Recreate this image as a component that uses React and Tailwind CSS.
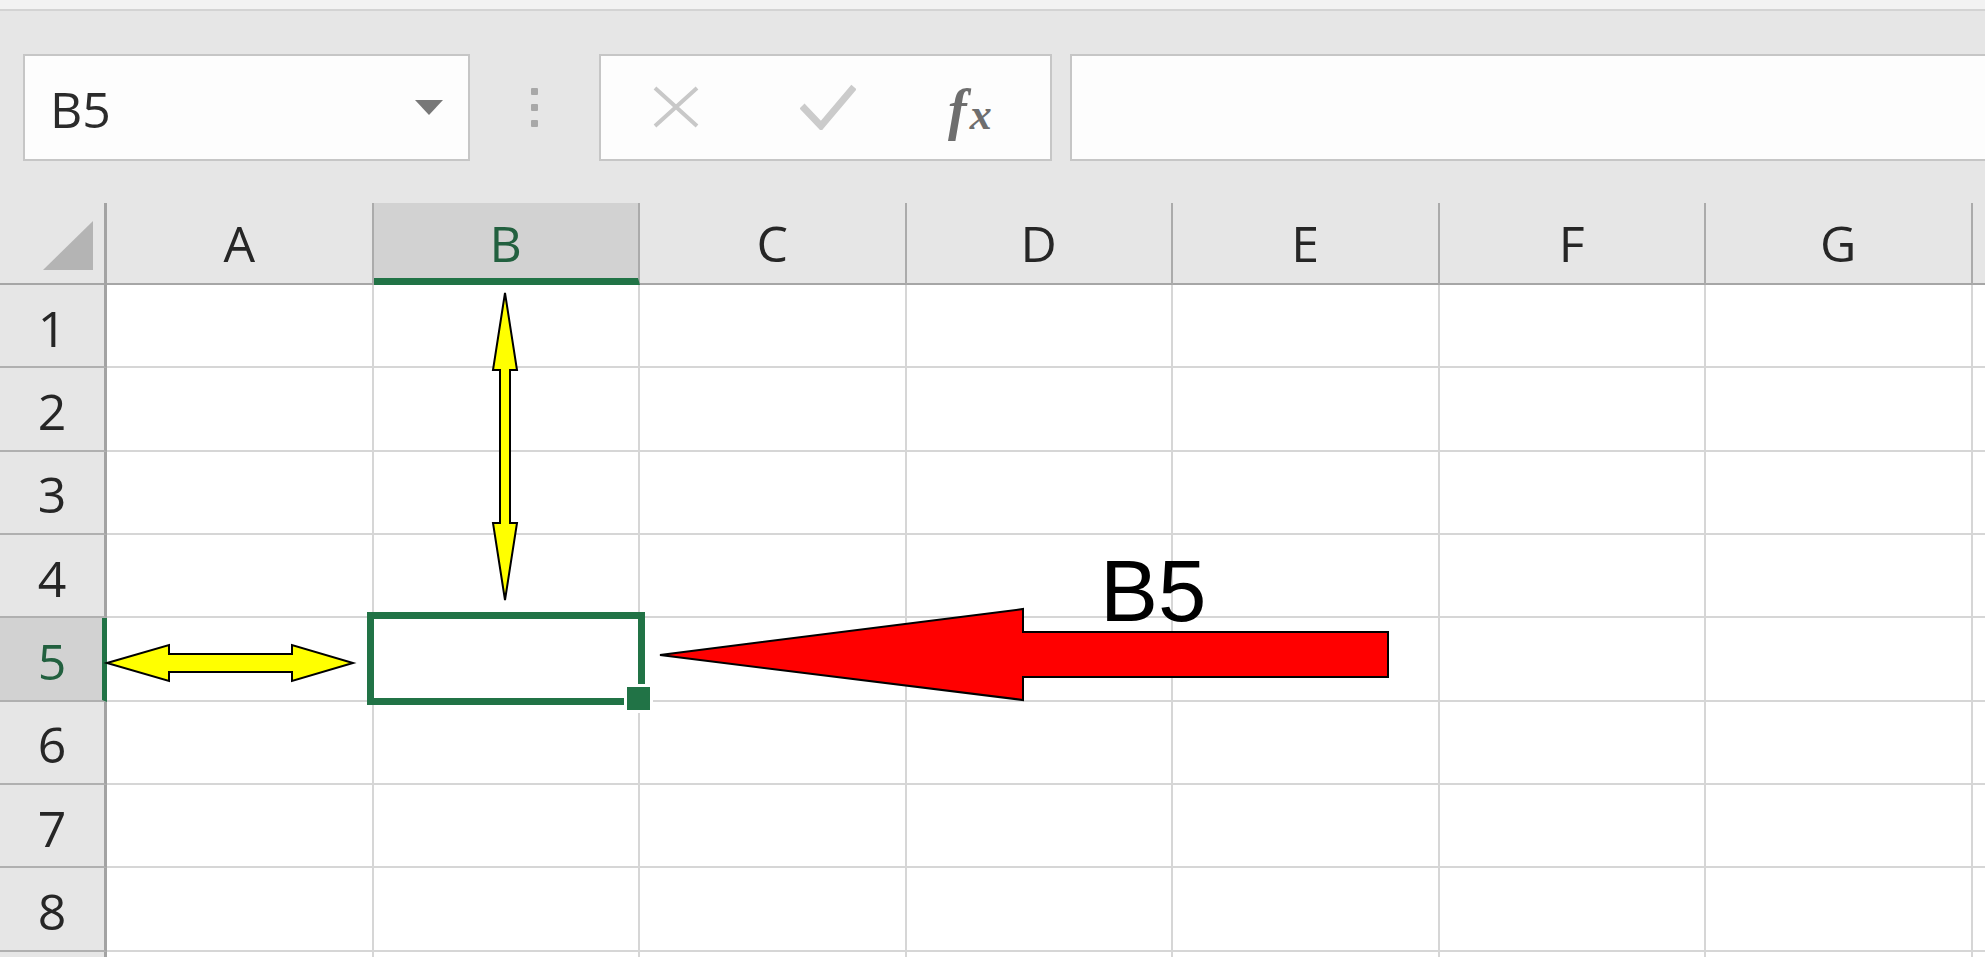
import React from 'react';

const COLUMNS = ['A', 'B', 'C', 'D', 'E', 'F', 'G', 'H'];
const ROWS = [1, 2, 3, 4, 5, 6, 7, 8, 9];
// column H and row 9 only peek in at the edges, their labels are off screen
const HIDDEN_LABELS = ['H', 9];

function ColumnHeader({ label, selected }) {
  const text = HIDDEN_LABELS.includes(label) ? '' : label;
  if (selected) {
    return (
      <div className="flex items-center justify-center bg-[#d2d2d2] border-r-2 border-r-[#ababab] border-b-[7px] border-b-[#217346] text-[50px] leading-none text-[#22603f] pt-[5px]">
        {text}
      </div>
    );
  }
  return (
    <div className="flex items-center justify-center bg-[#e6e6e6] border-r-2 border-r-[#ababab] border-b-2 border-b-[#a6a6a6] text-[50px] leading-none text-[#262626]">
      {text}
    </div>
  );
}

function RowHeader({ label, selected }) {
  const text = HIDDEN_LABELS.includes(label) ? '' : label;
  if (selected) {
    return (
      <div className="flex items-center justify-center bg-[#d2d2d2] border-r-[5px] border-r-[#217346] border-b-2 border-b-[#b0b0b0] text-[50px] leading-none text-[#22603f] pt-[4px] pl-[2px]">
        {text}
      </div>
    );
  }
  return (
    <div className="flex items-center justify-center bg-[#e6e6e6] border-r-[3px] border-r-[#a3a3a3] border-b-2 border-b-[#b0b0b0] text-[50px] leading-none text-[#262626] pt-[4px]">
      {text}
    </div>
  );
}

function Cell({ selected }) {
  return (
    <div className="relative bg-white border-r-2 border-b-2 border-[#d6d6d6]">
      {selected && (
        <>
          <div className="absolute left-[-7px] top-[-6px] right-[-7px] bottom-[-5px] border-[7px] border-[#217346] z-10" />
          <div className="absolute right-[-15px] bottom-[-13px] w-[29px] h-[29px] bg-[#217346] border-[3px] border-white z-10" />
        </>
      )}
    </div>
  );
}

function FormulaBar() {
  return (
    <div className="flex items-center h-[192px] pl-[23px]">
      <div className="flex items-center justify-between shrink-0 w-[447px] h-[107px] border-2 border-[#c6c6c6] bg-[#fdfdfd] pl-[25px] pr-[25px]">
        <span className="text-[50px] leading-none text-[#2b2b2b] pt-[4px]">B5</span>
        <svg width="28" height="15" viewBox="0 0 28 15">
          <polygon points="0,0 28,0 14,15" fill="#787878" />
        </svg>
      </div>

      <div className="flex flex-col gap-[9px] shrink-0 ml-[61px]">
        <div className="w-[7px] h-[7px] rounded-[1px] bg-[#a8a8a8]" />
        <div className="w-[7px] h-[7px] rounded-[1px] bg-[#a8a8a8]" />
        <div className="w-[7px] h-[7px] rounded-[1px] bg-[#a8a8a8]" />
      </div>

      <div className="flex items-center shrink-0 ml-[61px] w-[453px] h-[107px] border-2 border-[#c6c6c6] bg-[#fdfdfd] pl-[52px]">
        <svg width="46" height="42" viewBox="0 0 46 42">
          <path d="M2 2 L44 40 M44 2 L2 40" stroke="#c8c8c8" strokeWidth="4" fill="none" />
        </svg>
        <svg className="ml-[101px]" width="56" height="46" viewBox="0 0 56 46">
          <polyline points="2,22 21,42 54,3" stroke="#cbcbcb" strokeWidth="7" fill="none" />
        </svg>
        <span className="ml-[92px] pt-[6px] flex items-baseline text-[#6e6e6e] font-['Liberation_Serif',serif] italic font-bold leading-none">
          <span className="text-[56px]">f</span>
          <span className="text-[44px] ml-[3px]">x</span>
        </span>
      </div>

      <div className="shrink-0 ml-[18px] w-[930px] h-[107px] border-2 border-[#c6c6c6] bg-[#fdfdfd]" />
    </div>
  );
}

function Annotations() {
  return (
    <svg className="absolute top-0 left-0 pointer-events-none z-20" width="1985" height="957" viewBox="0 0 1985 957">
      <polygon
        points="505,293 517,370 510,370 510,523 517,523 505,600 493,523 500,523 500,370 493,370"
        fill="#ffff00"
        stroke="#000000"
        strokeWidth="2"
      />
      <polygon
        points="107,663 169,645 169,654 292,654 292,645 353,663 292,681 292,672 169,672 169,681"
        fill="#ffff00"
        stroke="#000000"
        strokeWidth="2"
      />
      <polygon
        points="660,655 1023,609 1023,632 1388,632 1388,677 1023,677 1023,700"
        fill="#ff0000"
        stroke="#000000"
        strokeWidth="2"
      />
    </svg>
  );
}

export default function App() {
  return (
    <div className="relative w-[1985px] h-[957px] overflow-hidden bg-[#e6e6e6] font-['Open_Sans','Noto_Sans',sans-serif]">
      <div className="h-[11px] bg-[#f2f2f2] border-b-2 border-[#d3d3d3]" />
      <FormulaBar />

      {/* sheet grid */}
      <div className="grid grid-cols-[107px_repeat(8,266.5px)] grid-rows-[82px_repeat(9,83.33px)]">
        <div className="flex items-end justify-end bg-[#e6e6e6] border-r-[3px] border-r-[#a3a3a3] border-b-2 border-b-[#a6a6a6] pr-[11px] pb-[13px]">
          <svg width="50" height="49" viewBox="0 0 50 49">
            <polygon points="50,0 50,49 0,49" fill="#b4b4b4" />
          </svg>
        </div>
        {COLUMNS.map((c) => (
          <ColumnHeader key={c} label={c} selected={c === 'B'} />
        ))}

        {ROWS.map((r) => (
          <React.Fragment key={r}>
            <RowHeader label={r} selected={r === 5} />
            {COLUMNS.map((c) => (
              <Cell key={c + r} selected={r === 5 && c === 'B'} />
            ))}
          </React.Fragment>
        ))}
      </div>

      <Annotations />
      <div className="absolute left-[1100px] top-[547px] z-20 text-[87px] leading-none text-black font-['Liberation_Sans',Arial,sans-serif]">
        B5
      </div>
    </div>
  );
}
